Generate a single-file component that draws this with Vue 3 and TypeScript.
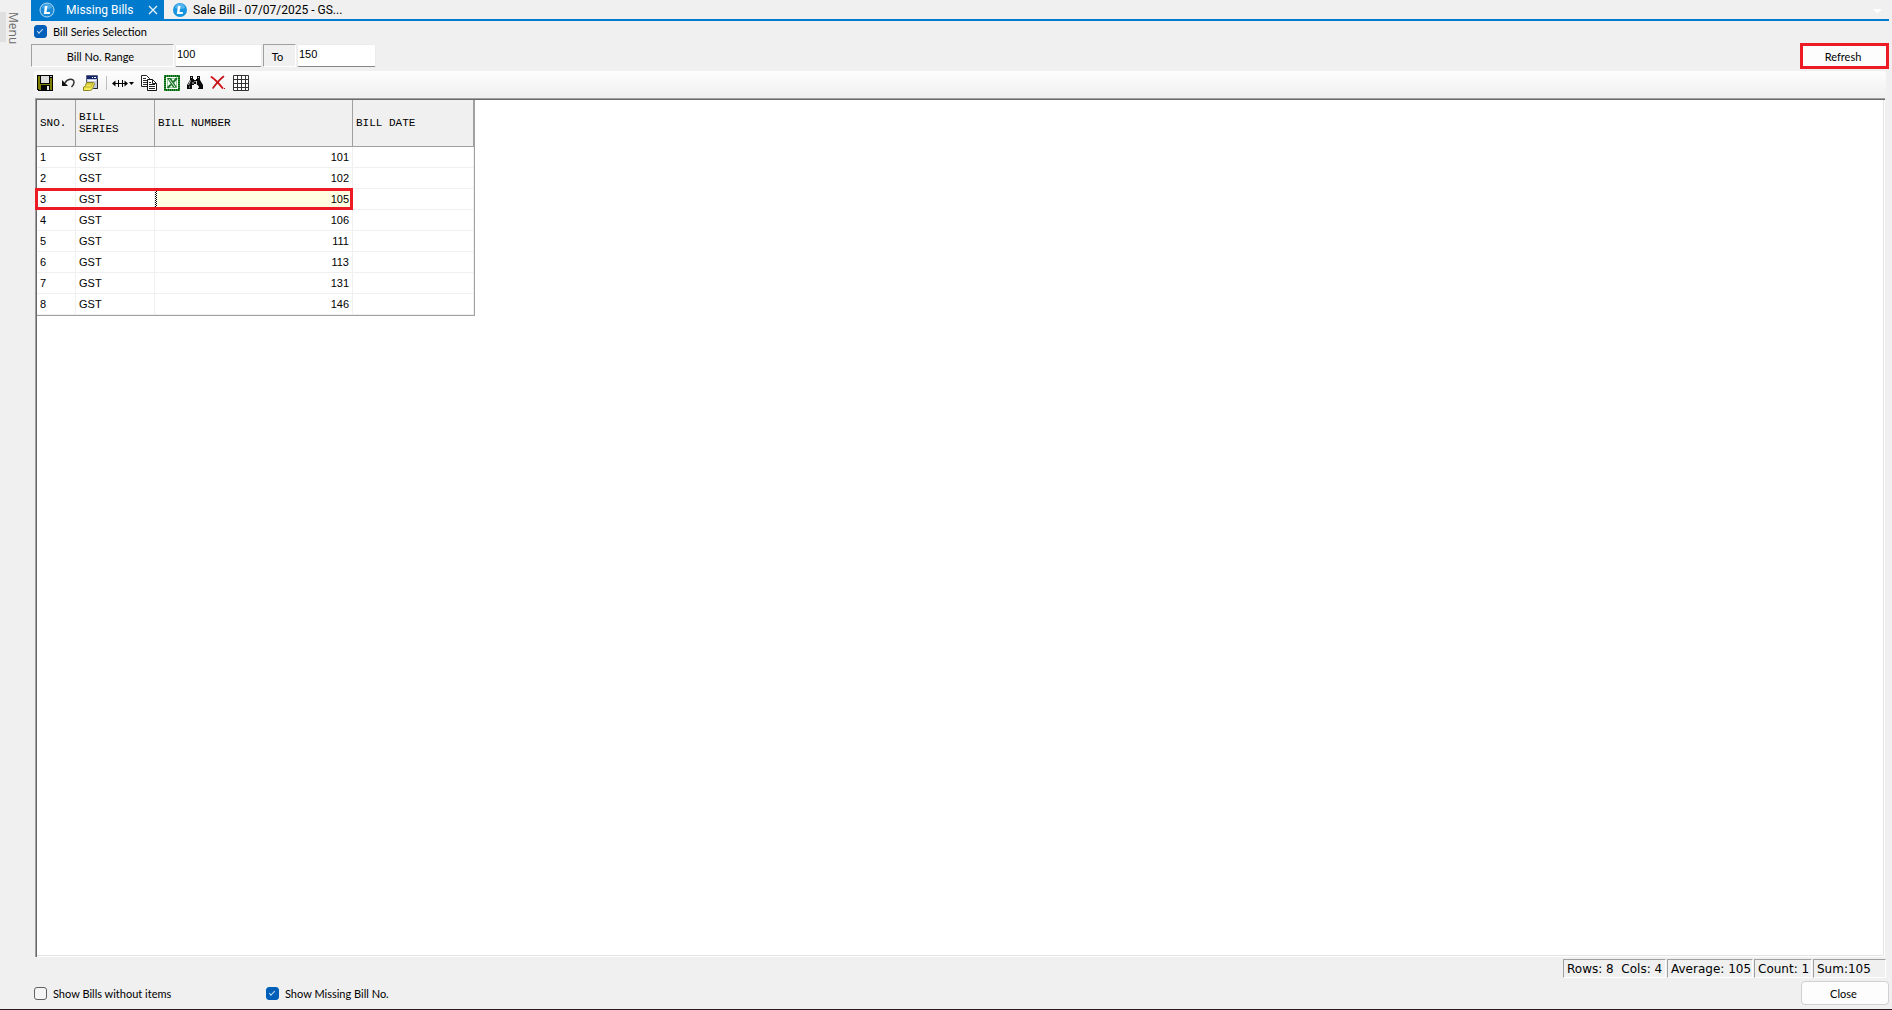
<script setup lang="ts">
import { ref } from 'vue'

interface BillRow {
  sno: number
  series: string
  number: number
  date: string
}

const seriesSelection = ref(true)
const withoutItems = ref(false)
const showMissing = ref(true)
const rangeFrom = ref('100')
const rangeTo = ref('150')
const selected = ref(3)

const rows: BillRow[] = [101, 102, 105, 106, 111, 113, 131, 146].map((n, i) => ({
  sno: i + 1,
  series: 'GST',
  number: n,
  date: '',
}))
</script>

<template>
  <div class="app">
    <aside class="side">
      <button class="menu" type="button">Menu</button>
    </aside>
    <main class="main">
      <nav class="tabs">
        <button class="tab active" type="button">
          <svg class="logo" width="16" height="16" viewBox="0 0 16 16">
            <circle cx="8" cy="8" r="7" fill="#1b8ad6" stroke="#b9dcf5" stroke-width="1" />
            <path d="M3 6a5 4 0 0 1 10 0q-5 2-10 0z" fill="#4aa8e6" />
            <path d="M6 4h2.500l-1 6h3.500l-.3 2H4.800z" fill="#fff" />
          </svg>
          <span class="name">Missing Bills</span>
          <svg class="x" width="10" height="10" viewBox="0 0 10 10"><path d="M1 1l8 8M9 1l-8 8" stroke="#e8f3fb" stroke-width="1.300" /></svg>
        </button>
        <button class="tab" type="button">
          <svg class="logo" width="16" height="16" viewBox="0 0 16 16">
            <circle cx="8" cy="8" r="7" fill="#1594e0" />
            <path d="M3 6a5 4.500 0 0 1 10 0q-5 2-10 0z" fill="#55b5ee" />
            <path d="M6 4h2.500l-1 6h3.500l-.3 2H4.800z" fill="#fff" />
          </svg>
          <span>Sale Bill - 07/07/2025 - GS...</span>
        </button>
        <svg class="more" width="9" height="5" viewBox="0 0 9 5"><path d="M0 0h9L4.500 4.500z" fill="#fff" /></svg>
      </nav>

      <label class="check top"><input v-model="seriesSelection" type="checkbox" />Bill Series Selection</label>

      <div class="range">
        <label class="cap wide" for="from">Bill No. Range</label>
        <input id="from" v-model="rangeFrom" class="from" type="text" />
        <label class="cap to" for="to">To</label>
        <input id="to" v-model="rangeTo" class="until" type="text" />
        <button class="refresh" type="button">Refresh</button>
      </div>

      <div class="tools">
        <button type="button" aria-label="Save">
          <svg width="16" height="16" shape-rendering="crispEdges">
            <path d="M0 0h16v16H1l-1-1z" fill="#000" />
            <path d="M1 1h2v8h10V3h2v12H2l-1-1z" fill="#808000" />
            <path d="M4 1h8v7H4z" fill="#dcdcdc" /><path d="M13 1h2v1h-2z" fill="#c0c0c0" />
            <path d="M4 10h9v6H4z" fill="#000" /><path d="M10 11h2v4h-2z" fill="#e8e8e8" />
          </svg>
        </button>
        <button type="button" aria-label="Undo">
          <svg width="16" height="16" viewBox="0 0 16 16">
            <path d="M5 8C7 3.500 14 2.500 14 7.500c0 2-1 3-2.500 4.500" fill="none" stroke="#333" stroke-width="1.500" />
            <path d="M2 5v6h6z" fill="#111" />
          </svg>
        </button>
        <button type="button" aria-label="Properties">
          <svg width="16" height="16" viewBox="0 0 16 16">
            <path d="M3.500.5h11v13h-11z" fill="#c3cbe3" stroke="#555d80" />
            <path d="M4 1h10v3H4z" fill="#17256b" /><path d="M9 2h1v1H9zM11 2h2v1h-2z" fill="#fff" />
            <path d="M5 5h8v1H5z" fill="#fff" />
            <path d="M3.500 7.500h7l1 1-1 3-2 3.500-2 .5H.500V12l2-1z" fill="#f4ec58" stroke="#8b8420" />
            <path d="M1 12h7l2-4M4 9h5" fill="none" stroke="#b9ae2b" /><path d="M14.500 4v9.500H11" fill="none" stroke="#222" />
          </svg>
        </button>
        <i class="sep"></i>
        <button class="fit" type="button" aria-label="Column width">
          <svg width="22" height="16" viewBox="0 0 22 16">
            <path d="M1 8.500h14M6.500 5v7M10.500 5v7" fill="none" stroke="#000" />
            <path d="M0 8.500l3.500-3v6zM16 8.500l-3.500-3v6zM17 7h5l-2.500 3z" fill="#000" />
          </svg>
        </button>
        <button type="button" aria-label="Copy">
          <svg width="16" height="16" viewBox="0 0 16 16">
            <path d="M.5.5h5l3 3v8h-8z" fill="#fff" stroke="#222" /><path d="M2 3.500h3M2 5.500h4M2 7.500h4M2 9.500h4" stroke="#333" />
            <path d="M6.500 4.500h5l4 4v7h-9z" fill="#fff" stroke="#111" />
            <path d="M11.500 4.500v4h4M8 7.500h2M8 9.500h6M8 11.500h6M8 13.500h6" fill="none" stroke="#222" />
          </svg>
        </button>
        <button type="button" aria-label="Export to Excel">
          <svg width="16" height="16" viewBox="0 0 16 16">
            <path d="M1 1h14v14H1z" fill="#fff" stroke="#2f9a3a" stroke-width="2" />
            <path d="M1 1h14v14H1z" fill="none" stroke="#075c12" stroke-width="2" stroke-dasharray="1 1" />
            <path d="M3.500 3.500h9v9h-9z" fill="#fff" stroke="#9ccf9f" />
            <path d="M3 3h4l6 9.500H9z" fill="#1b7627" /><path d="M5 4l6 8" stroke="#d8efd9" />
            <path d="M13 3L9.500 7M7 9.500L3.500 13" stroke="#1b7627" stroke-width="2" />
          </svg>
        </button>
        <button type="button" aria-label="Find">
          <svg width="16" height="16" viewBox="0 0 16 16">
            <path d="M3 1h3v3h1v1h2V4h1V1h3v4l3 5v4h-5v-4H9V9H7v1H5v4H0v-4l3-5z" fill="#0a0a0a" />
            <path d="M3.500 5.500L1.500 10M9.500 6v4M2 12h1M11.500 11v2M4.500 2v1M11.500 2v1M6 7v2" stroke="#cfcfcf" fill="none" />
            <path d="M7 6h2v1H7z" fill="#888" />
          </svg>
        </button>
        <button type="button" aria-label="Delete">
          <svg width="16" height="16" viewBox="0 0 16 16">
            <path d="M1.500 2c3 2 7 6 11 11" fill="none" stroke="#d4141a" stroke-width="2" stroke-linecap="round" />
            <path d="M13.500 1.500C9 5 6 9 3 13" fill="none" stroke="#c01016" stroke-width="1.600" stroke-linecap="round" />
            <path d="M14 13h1v1h-1z" fill="#c01016" />
          </svg>
        </button>
        <button type="button" aria-label="Grid">
          <svg width="16" height="16" viewBox="0 0 16 16">
            <path d="M.5.500h15v15H.500zM4.500 0v16M8.500 0v16M12.500 0v16M0 4.500h16M0 8.500h16M0 12.500h16" fill="#fff" stroke="#333" />
          </svg>
        </button>
      </div>

      <section class="grid">
        <table>
          <colgroup><col class="c1" /><col class="c2" /><col class="c3" /><col class="c4" /></colgroup>
          <thead>
            <tr><th>SNO.</th><th>BILL SERIES</th><th>BILL NUMBER</th><th>BILL DATE</th></tr>
          </thead>
          <tbody>
            <tr v-for="r in rows" :key="r.sno" :class="{ marked: r.sno === selected }" @click="selected = r.sno">
              <td>{{ r.sno }}</td><td>{{ r.series }}</td><td class="num">{{ r.number }}</td><td>{{ r.date }}</td>
            </tr>
          </tbody>
        </table>
      </section>

      <div class="status">
        <span class="s1">Rows: 8&nbsp; Cols: 4</span>
        <span class="s2">Average: 105</span>
        <span class="s3">Count: 1</span>
        <span class="s4">Sum:105</span>
      </div>

      <footer class="foot">
        <label class="check first"><input v-model="withoutItems" type="checkbox" />Show Bills without items</label>
        <label class="check"><input v-model="showMissing" type="checkbox" />Show Missing Bill No.</label>
        <button class="close" type="button">Close</button>
      </footer>
    </main>
  </div>
</template>

<style>
body {
  background: #f0f0f0;
}
</style>

<style scoped>
.app {
  box-sizing: border-box;
  display: flex;
  min-height: 100vh;
  background: #f0f0f0;
  border-bottom: 1px solid #2a1a22;
  color: #000;
  font: 11px/13px Lato, "Liberation Sans", sans-serif;
}
button {
  margin: 0;
  padding: 0;
  border: 0;
  background: none;
  font: inherit;
  color: inherit;
}
svg {
  display: block;
}
.side {
  width: 31px;
  flex: none;
  padding-top: 12px;
  box-sizing: border-box;
}
.menu {
  display: block;
  width: 20px;
  height: 30px;
  border-left: 6px solid #e0e0e0;
  writing-mode: vertical-rl;
  font: 12px/14px "Open Sans", sans-serif;
  color: #6a6a6a;
}
.main {
  flex: 1;
  min-width: 0;
  display: flex;
  flex-direction: column;
  padding-right: 3px;
}
.tabs {
  display: flex;
  align-items: center;
  height: 19px;
  border-bottom: 2px solid #007acc;
  font: 12px/18px Roboto, sans-serif;
}
.tab {
  display: flex;
  align-items: center;
  height: 19px;
  padding: 0 8px;
  gap: 5px;
}
.tab.active {
  box-sizing: border-box;
  width: 133px;
  background: #007acc;
  color: #fff;
}
.active .name {
  margin-left: 6px;
}
.active .x {
  margin-left: auto;
  margin-right: -2px;
}
.more {
  margin: 4px 7px 0 auto;
}
.check {
  display: flex;
  align-items: center;
  gap: 6px;
}
.check input {
  appearance: none;
  box-sizing: border-box;
  width: 13px;
  height: 13px;
  margin: 0;
  border: 1px solid #626262;
  border-radius: 3px;
  background: #f5f5f5;
}
.check input:checked {
  border-color: #005fb8;
  background: #005fb8;
}
.check input:checked::after {
  content: "";
  display: block;
  width: 5px;
  height: 2px;
  margin: 3px 0 0 2px;
  border: solid #c5ddf2;
  border-width: 0 0 1px 1px;
  transform: rotate(-45deg);
}
.top {
  height: 13px;
  padding: 4px 3px 5px;
}
.range {
  display: flex;
  height: 26px;
}
.cap {
  box-sizing: border-box;
  height: 23px;
  margin-top: 1px;
  padding: 1px 4px 0 0;
  border: solid;
  border-width: 1px;
  border-color: #a0a0a0 #fff #fff #a0a0a0;
  text-align: center;
  line-height: 22px;
}
.wide {
  width: 143px;
}
.to {
  width: 33px;
  margin-left: 1px;
}
.range input {
  box-sizing: border-box;
  height: 23px;
  margin: 1px 0 0 1px;
  padding: 0 1px 4px;
  border: 1px solid #ececec;
  border-bottom-color: #868686;
  border-radius: 2px;
  background: #fff;
  font: 11px/13px "Liberation Sans", sans-serif;
  color: inherit;
}
.from {
  width: 87px;
}
.until {
  width: 79px;
}
.refresh {
  box-sizing: border-box;
  width: 89px;
  height: 26px;
  margin-left: auto;
  padding-right: 3px;
  border: 3px solid #ed1c24;
  background: #fdfdfd;
}
.tools {
  box-sizing: border-box;
  display: flex;
  align-items: center;
  gap: 7px;
  height: 27px;
  margin: 2px 3px 0;
  padding: 0 3px 3px;
  border-radius: 3px;
  background: linear-gradient(#fdfdfd, #f0f0f0);
}
.sep {
  width: 1px;
  height: 14px;
  background: #bdbdbd;
}
.fit {
  margin-left: -2px;
}
.grid {
  flex: 1;
  margin: 0 4px 0 4px;
  border: solid #a0a0a0;
  border-width: 1px 0 0 1px;
  box-shadow: inset 1px 1px #696969, inset -1px -1px #fff, inset -2px -2px #e3e3e3;
  padding: 1px;
  background: #fff;
}
table {
  width: 438px;
  table-layout: fixed;
  border-collapse: separate;
  border-spacing: 0;
  border: solid #a0a0a0;
  border-width: 0 1px 1px 0;
}
.c1 {
  width: 39px;
}
.c2 {
  width: 79px;
}
.c3 {
  width: 198px;
}
th,
td {
  box-sizing: border-box;
  padding: 0 3px;
  text-align: left;
}
th {
  height: 47px;
  border: solid #a0a0a0;
  border-width: 0 1px 1px 0;
  background: #f0f0f0;
  font: 11px/12px "Liberation Mono", monospace;
}
td {
  height: 21px;
  border: solid #f0f0f0;
  border-width: 0 1px 1px 0;
  font: 11px/13px "Liberation Sans", sans-serif;
}
.num {
  text-align: right;
}
.marked .num {
  background: repeating-conic-gradient(#000 0 25%, #fff 0 50%) 0 0 / 2px 2px repeat-y #ffffe1;
}
.marked td:first-child {
  position: relative;
}
.marked td:first-child::after {
  content: "";
  position: absolute;
  box-sizing: border-box;
  left: -2px;
  top: -1px;
  width: 318px;
  height: 22px;
  border: 3px solid #ed1c24;
}
.status {
  display: flex;
  justify-content: flex-end;
  gap: 1px;
  margin: 2px 3px 0 0;
  font: 12px/18px "DejaVu Sans", sans-serif;
}
.status span {
  box-sizing: border-box;
  height: 19px;
  padding-left: 3px;
  border: 1px solid;
  border-color: #a0a0a0 #fff #fff #a0a0a0;
  white-space: nowrap;
}
.s1 {
  width: 103px;
}
.s2 {
  width: 86px;
}
.s3 {
  width: 58px;
}
.s4 {
  width: 73px;
}
.foot {
  display: flex;
  align-items: center;
  padding: 3px 0 4px 3px;
}
.foot .first {
  width: 232px;
}
.close {
  box-sizing: border-box;
  width: 88px;
  height: 24px;
  margin-left: auto;
  padding-right: 3px;
  border: 1px solid #d0d0d0;
  border-radius: 4px;
  background: #fdfdfd;
}
</style>
